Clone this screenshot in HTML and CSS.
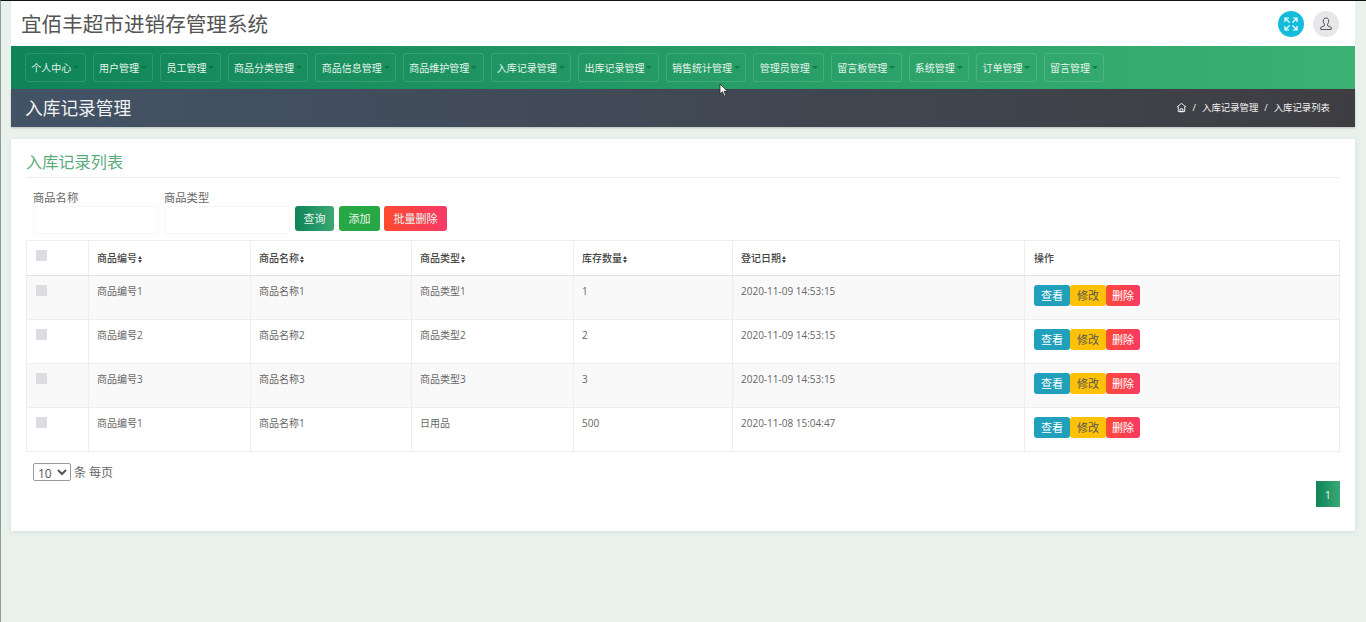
FILE: index.html
```html
<!DOCTYPE html>
<html lang="en">

<head>
    <meta charset="UTF-8">
    <meta name="viewport" content="width=device-width, initial-scale=1.0">
    <title>入库记录管理</title>
    <link rel="stylesheet" href="styles.css">
</head>

<body>
    <div class="page">
        <header class="top-bar">
            <h1>宜佰丰超市进销存管理系统</h1>
            <div class="top-icons">
                <span class="round-icon round-cyan">
                    <svg width="16" height="16" viewBox="0 0 16 16" fill="none" stroke="#fff" stroke-width="1.2">
                        <path d="M2 6V2h4M2 2l4.500 4.500M10 2h4v4M14 2L9.500 6.500M2 10v4h4M2 14l4.500-4.500M14 10v4h-4M14 14L9.500 9.500" />
                    </svg>
                </span>
                <span class="round-icon round-grey">
                    <svg width="14" height="14" viewBox="0 0 14 14" fill="none" stroke="#555" stroke-width="1">
                        <path d="M7 1c-1.800 0-2.800 1.200-2.800 2.900 0 1.300.5 2.400 1.200 3.200v1.700L1.800 10.300v2.200h10.400v-2.200L8.600 8.800V7.100c.7-.8 1.200-1.900 1.200-3.200C9.800 2.200 8.800 1 7 1z" />
                    </svg>
                </span>
            </div>
        </header>

        <nav class="main-nav">
            <a class="nav-btn">个人中心<i class="caret"></i></a>
            <a class="nav-btn">用户管理<i class="caret"></i></a>
            <a class="nav-btn">员工管理<i class="caret"></i></a>
            <a class="nav-btn">商品分类管理<i class="caret"></i></a>
            <a class="nav-btn">商品信息管理<i class="caret"></i></a>
            <a class="nav-btn">商品维护管理<i class="caret"></i></a>
            <a class="nav-btn">入库记录管理<i class="caret"></i></a>
            <a class="nav-btn">出库记录管理<i class="caret"></i></a>
            <a class="nav-btn">销售统计管理<i class="caret"></i></a>
            <a class="nav-btn">管理员管理<i class="caret"></i></a>
            <a class="nav-btn">留言板管理<i class="caret"></i></a>
            <a class="nav-btn">系统管理<i class="caret"></i></a>
            <a class="nav-btn">订单管理<i class="caret"></i></a>
            <a class="nav-btn">留言管理<i class="caret"></i></a>
        </nav>

        <div class="title-bar">
            <h2>入库记录管理</h2>
            <div class="breadcrumb">
                <svg width="11" height="11" viewBox="0 0 12 12" fill="none" stroke="#fff" stroke-width="1">
                    <path d="M1 5.500L6 1.500l5 4M2.500 5v5.500h7V5M4.500 7.500h3v3h-3z" />
                </svg>
                <span class="sep">/</span>
                <span>入库记录管理</span>
                <span class="sep">/</span>
                <span>入库记录列表</span>
            </div>
        </div>

        <main class="card">
            <h3 class="card-title">入库记录列表</h3>

            <div class="search-row">
                <div class="field">
                    <label>商品名称</label>
                    <input type="text">
                </div>
                <div class="field">
                    <label>商品类型</label>
                    <input type="text">
                </div>
                <button class="btn btn-search">查询</button>
                <button class="btn btn-add">添加</button>
                <button class="btn btn-batch">批量删除</button>
            </div>

            <table class="data-table">
                <thead>
                    <tr>
                        <th><span class="check"></span></th>
                        <th>商品编号<i class="sort"></i></th>
                        <th>商品名称<i class="sort"></i></th>
                        <th>商品类型<i class="sort"></i></th>
                        <th>库存数量<i class="sort"></i></th>
                        <th>登记日期<i class="sort"></i></th>
                        <th>操作</th>
                    </tr>
                </thead>
                <tbody>
                    <tr>
                        <td><span class="check"></span></td>
                        <td>商品编号1</td>
                        <td>商品名称1</td>
                        <td>商品类型1</td>
                        <td>1</td>
                        <td>2020-11-09 14:53:15</td>
                        <td><div class="actions"><a class="act act-view">查看</a><a class="act act-edit">修改</a><a class="act act-del">删除</a></div></td>
                    </tr>
                    <tr>
                        <td><span class="check"></span></td>
                        <td>商品编号2</td>
                        <td>商品名称2</td>
                        <td>商品类型2</td>
                        <td>2</td>
                        <td>2020-11-09 14:53:15</td>
                        <td><div class="actions"><a class="act act-view">查看</a><a class="act act-edit">修改</a><a class="act act-del">删除</a></div></td>
                    </tr>
                    <tr>
                        <td><span class="check"></span></td>
                        <td>商品编号3</td>
                        <td>商品名称3</td>
                        <td>商品类型3</td>
                        <td>3</td>
                        <td>2020-11-09 14:53:15</td>
                        <td><div class="actions"><a class="act act-view">查看</a><a class="act act-edit">修改</a><a class="act act-del">删除</a></div></td>
                    </tr>
                    <tr>
                        <td><span class="check"></span></td>
                        <td>商品编号1</td>
                        <td>商品名称1</td>
                        <td>日用品</td>
                        <td>500</td>
                        <td>2020-11-08 15:04:47</td>
                        <td><div class="actions"><a class="act act-view">查看</a><a class="act act-edit">修改</a><a class="act act-del">删除</a></div></td>
                    </tr>
                </tbody>
            </table>

            <div class="page-size">
                <select>
                    <option>10</option>
                </select>
                <span>条 每页</span>
            </div>

            <div class="pager">
                <a class="page-num">1</a>
            </div>
        </main>
    </div>

    <svg class="cursor" width="10" height="14" viewBox="0 0 10 14">
        <path d="M1 1v10l2.400-2.200L5.200 13l1.600-.7-1.800-4h3.500z" fill="#fff" stroke="#222" stroke-width=".8" />
    </svg>
</body>

</html>
```

FILE: styles.css
```css
* {
    box-sizing: border-box;
}

html,
body {
    height: 100%;
}

body {
    margin: 0;
    font-family: "Open Sans", "Noto Sans CJK SC", sans-serif;
    font-size: 10px;
    color: #666;
    background-color: #e8f1ec;
    border-top: 1px solid #111;
    border-left: 1px solid #8d9c94;
    overflow: hidden;
}

.page {
    margin: 0 11px 0 10px;
}

.top-bar {
    height: 45px;
    padding: 0 16px 2px 10px;
    background-color: #fff;
    display: flex;
    align-items: center;
    justify-content: space-between;
}

h1 {
    margin: 0;
    font-size: 20.600px;
    font-weight: 400;
    color: #555;
}

.top-icons {
    display: flex;
    align-items: center;
    gap: 9px;
    margin-top: 2px;
}

.round-icon {
    width: 26px;
    height: 26px;
    border-radius: 50%;
    display: flex;
    align-items: center;
    justify-content: center;
}

.round-cyan {
    background-color: #14bcdc;
}

.round-grey {
    background-color: #e7e7ea;
}

.main-nav {
    height: 43px;
    padding: 7px 14px;
    display: flex;
    gap: 7px;
    background: linear-gradient(90deg, #0f8458, #3bb273);
}

.nav-btn {
    height: 29px;
    padding: 0 5.300px;
    display: flex;
    align-items: center;
    color: #e8f5ee;
    border: 1px solid rgba(255, 255, 255, 0.13);
    border-radius: 3px;
    font-size: 10px;
    white-space: nowrap;
}

.caret {
    width: 0;
    height: 0;
    margin-left: 2px;
    border-top: 3px solid rgba(10, 110, 70, 0.8);
    border-left: 3px solid transparent;
    border-right: 3px solid transparent;
}

.title-bar {
    height: 38px;
    padding: 0 25px 2px 14px;
    display: flex;
    align-items: center;
    justify-content: space-between;
    background: linear-gradient(90deg, #435366, #3e3e42);
    box-shadow: 0 1px 2px rgba(0, 0, 0, 0.2);
}

h2 {
    margin: 0;
    font-size: 17.700px;
    font-weight: 400;
    color: #f1f3f4;
}

.breadcrumb {
    display: flex;
    align-items: center;
    color: #f1f1f1;
    font-size: 9.400px;
}

.sep {
    margin: 0 6px;
}

.card {
    height: 392px;
    margin-top: 12px;
    padding: 14px 15px 0;
    background-color: #fff;
    box-shadow: 0 1px 5px rgba(0, 0, 0, 0.08);
}

.card-title {
    height: 25px;
    margin: 0;
    font-size: 16.200px;
    line-height: 19px;
    font-weight: 400;
    color: #5aab7c;
    border-bottom: 1px solid #eceeef;
}

.search-row {
    height: 62px;
    padding: 12px 0 0 7px;
    display: flex;
    align-items: flex-start;
}

.field {
    width: 131px;
    display: flex;
    flex-direction: column;
}

.field label {
    height: 16px;
    font-size: 11.300px;
    line-height: 15px;
    color: #666;
}

.field input {
    width: 126px;
    height: 28px;
    border: 1px solid #f6f6f6;
    background-color: #fff;
}

.btn {
    height: 25px;
    margin: 16px 4px 0 0;
    padding: 0 0 1px;
    border: none;
    border-radius: 3px;
    color: #e8f5ee;
    font-family: inherit;
    font-size: 11px;
}

.btn-search {
    width: 39px;
    margin-right: 5px;
    background: linear-gradient(90deg, #0f8458, #3aa873);
}

.btn-add {
    width: 41px;
    background-color: #28a745;
}

.btn-batch {
    width: 63px;
    background: linear-gradient(90deg, #fd4a2e, #f83a68);
}

.data-table {
    width: 1314px;
    table-layout: fixed;
    border-collapse: collapse;
    font-size: 10px;
}

.data-table th:nth-child(1) {
    width: 62px;
}

.data-table th:nth-child(2) {
    width: 162px;
}

.data-table th:nth-child(3) {
    width: 161px;
}

.data-table th:nth-child(4) {
    width: 162px;
}

.data-table th:nth-child(5) {
    width: 159px;
}

.data-table th:nth-child(6) {
    width: 292px;
}

th,
td {
    padding: 9px 8px 0 9px;
    border: 1px solid #eeeeee;
    text-align: left;
    vertical-align: top;
}

th:not(:first-child),
td:not(:first-child) {
    padding-left: 8px;
}

th:last-child,
td:last-child {
    padding-left: 9px;
}

thead tr {
    height: 35px;
}

th {
    color: #444;
    font-weight: 500;
    line-height: 16px;
    border-bottom: 1px solid #e0e0e0;
}

tbody tr {
    height: 44px;
}

td {
    line-height: 12px;
}

tbody tr:nth-child(odd) {
    background-color: #f9f9f9;
}

.check {
    display: block;
    width: 11px;
    height: 11px;
    background-color: #dcdde2;
}

.sort {
    display: inline-flex;
    flex-direction: column;
    gap: 1px;
    margin-left: 1px;
    vertical-align: middle;
}

.sort::before,
.sort::after {
    content: "";
    border-left: 2.500px solid transparent;
    border-right: 2.500px solid transparent;
}

.sort::before {
    border-bottom: 3px solid #444;
}

.sort::after {
    border-top: 3px solid #444;
}

.actions {
    display: flex;
}

.act {
    height: 21px;
    display: flex;
    align-items: center;
    justify-content: center;
    border-radius: 3px;
    font-size: 11px;
}

.act-view {
    width: 36px;
    background-color: #20a0ba;
    color: #fff;
}

.act-edit {
    width: 36px;
    background-color: #ffc107;
    color: #555;
}

.act-del {
    width: 34px;
    background: linear-gradient(90deg, #fd4a38, #f83a62);
    color: #fff;
}

.page-size {
    margin: 11px 0 0 7px;
    height: 18px;
    display: flex;
    align-items: center;
    gap: 3px;
    font-size: 12px;
    color: #666;
}

.page-size select {
    width: 38px;
    height: 18px;
    padding: 0;
    font-family: inherit;
    font-size: 12px;
    color: #555;
    background-color: #fff;
    border: 1px solid #999;
    border-radius: 2px;
}

.pager {
    display: flex;
    justify-content: flex-end;
}

.page-num {
    width: 24px;
    height: 26px;
    display: flex;
    align-items: center;
    justify-content: center;
    font-size: 11px;
    color: #e8f5ee;
    background: linear-gradient(90deg, #0f8458, #3aa873);
}

.cursor {
    position: absolute;
    left: 719px;
    top: 83px;
}
```
